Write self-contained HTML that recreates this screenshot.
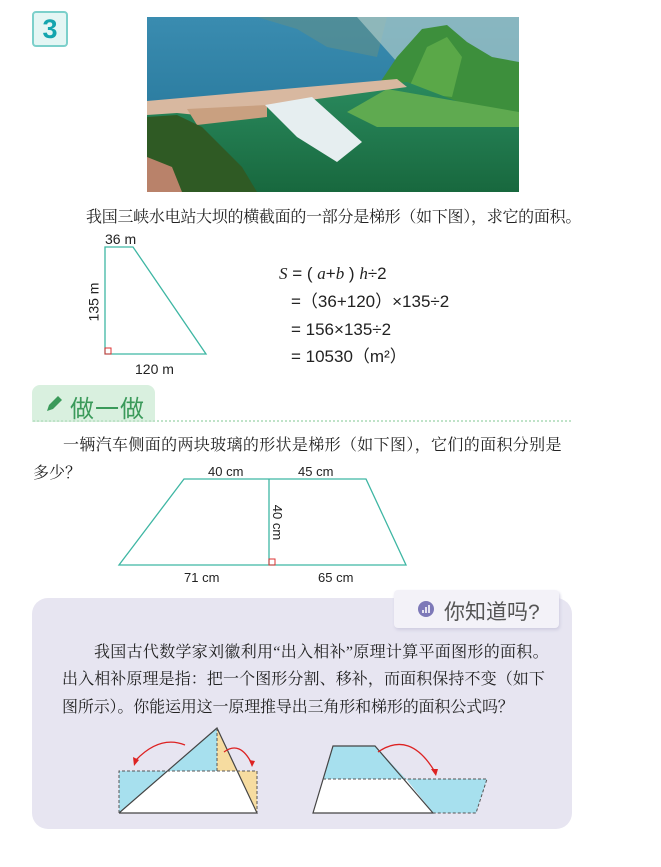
<!DOCTYPE html>
<html><head><meta charset="utf-8"><style>
*{margin:0;padding:0;box-sizing:border-box}
body{width:661px;height:867px;background:#fff;position:relative;overflow:hidden;font-family:"Liberation Serif","Noto Serif CJK SC",serif;color:#222}
.a{position:absolute;white-space:nowrap}
.s{font-family:"Liberation Sans","Noto Sans CJK SC",sans-serif}
.t{font-size:16px;line-height:17px}
.f{font-size:17px;line-height:20px;height:20px}
</style></head><body>
<div class="a s" style="left:32px;top:11px;width:36px;height:36px;border:2px solid #7cd0cb;border-radius:4px;background:#e4f6f4;color:#15a5ae;font-size:27px;font-weight:bold;text-align:center;line-height:32px">3</div>

<svg class="a" style="left:147px;top:17px" width="372" height="175" viewBox="0 0 372 175">
<defs><linearGradient id="lk" x1="0" y1="0" x2="0" y2="1"><stop offset="0" stop-color="#3a8cb0"/><stop offset="1" stop-color="#1f6f92"/></linearGradient>
<linearGradient id="wt" x1="0" y1="0" x2="0" y2="1"><stop offset="0" stop-color="#2a8a5e"/><stop offset="1" stop-color="#18683e"/></linearGradient></defs>
<rect width="372" height="175" fill="url(#lk)"/>
<path d="M110 0 L240 0 L230 40 L180 30 L150 12Z" fill="#5f8f8a" opacity=".6"/>
<path d="M210 0 L372 0 L372 60 L330 50 L300 45 L250 45Z" fill="#a9c9c8" opacity=".7"/>
<path d="M230 70 L250 40 L275 12 L300 8 L320 25 L345 40 L372 45 L372 105 L300 95 L250 80Z" fill="#3d8f3c"/>
<path d="M260 75 L280 30 L300 20 L315 40 L305 80Z" fill="#5aa848"/>
<path d="M0 85 L0 175 L372 175 L372 95 L330 92 L260 65 L0 90Z" fill="url(#wt)"/>
<path d="M240 72 L372 95 L372 110 L230 110 L200 95Z" fill="#5faa50"/>
<path d="M0 84 L250 62 L260 70 L50 98 L30 96 L0 98Z" fill="#d8b8a0"/>
<path d="M40 92 L120 88 L120 100 L50 108Z" fill="#c9a080"/>
<path d="M118 88 L165 80 L215 125 L190 145 L150 120Z" fill="#e6eef0"/>
<path d="M0 100 L30 98 L55 110 L75 130 L95 150 L110 175 L0 175Z" fill="#2f5a24"/>
<path d="M0 140 L25 150 L35 175 L0 175Z" fill="#b9826a"/>
</svg>

<div class="a t" style="left:86px;top:209px;letter-spacing:-0.28px">我国三峡水电站大坝的横截面的一部分是梯形（如下图），求它的面积。</div>

<svg class="a" style="left:80px;top:230px" width="150" height="150">
<polygon points="25,17 53,17 126,124 25,124" fill="none" stroke="#3eb6a3" stroke-width="1.3"/>
<rect x="25" y="118" width="6" height="6" fill="none" stroke="#d33" stroke-width="1"/>
</svg>
<div class="a s" style="left:105px;top:231px;font-size:14px">36 m</div>
<div class="a s" style="left:74px;top:294px;font-size:14px;transform:rotate(-90deg)">135 m</div>
<div class="a s" style="left:135px;top:361px;font-size:14px">120 m</div>

<div class="a s f" style="left:279px;top:264px"><i style="font-family:'Liberation Serif'">S</i> = ( <i style="font-family:'Liberation Serif'">a</i>+<i style="font-family:'Liberation Serif'">b</i> ) <i style="font-family:'Liberation Serif'">h</i>÷2</div>
<div class="a s f" style="left:291px;top:292px">=（36+120）×135÷2</div>
<div class="a s f" style="left:291px;top:320px">= 156×135÷2</div>
<div class="a s f" style="left:291px;top:347px">= 10530（m²）</div>

<div class="a" style="left:32px;top:385px;width:123px;height:37px;background:#d9f0df;border-radius:8px 8px 0 0"></div>
<svg class="a" style="left:44px;top:394px" width="20" height="20"><path d="M3 17 L5 11 L14 2 L18 6 L9 15Z" fill="#3a9a5a"/></svg>
<div class="a s" style="left:70px;top:389px;font-size:24px;color:#3a9a5a;letter-spacing:1px">做一做</div>
<div class="a" style="left:33px;top:420px;width:538px;border-top:2px dotted #bfe3c8"></div>

<div class="a t" style="left:63px;top:437px;letter-spacing:.35px">一辆汽车侧面的两块玻璃的形状是梯形（如下图），它们的面积分别是</div>
<div class="a t" style="left:33px;top:465px">多少？</div>

<svg class="a" style="left:100px;top:470px" width="320" height="110">
<polygon points="84,9 266,9 306,95 19,95" fill="none" stroke="#3eb6a3" stroke-width="1.3"/>
<line x1="169" y1="9" x2="169" y2="95" stroke="#3eb6a3" stroke-width="1.3"/>
<rect x="169" y="89" width="6" height="6" fill="none" stroke="#d33" stroke-width="1"/>
</svg>
<div class="a s" style="left:208px;top:464px;font-size:13px">40 cm</div>
<div class="a s" style="left:298px;top:464px;font-size:13px">45 cm</div>
<div class="a s" style="left:260px;top:515px;font-size:13px;transform:rotate(90deg)">40 cm</div>
<div class="a s" style="left:184px;top:570px;font-size:13px">71 cm</div>
<div class="a s" style="left:318px;top:570px;font-size:13px">65 cm</div>

<div class="a" style="left:32px;top:598px;width:540px;height:231px;background:#e7e5f1;border-radius:16px"></div>
<div class="a" style="left:394px;top:590px;width:165px;height:38px;background:#f3f2f8;border-radius:4px;box-shadow:1px 2px 3px #cfcde0"></div>
<div class="a" style="left:418px;top:601px;width:16px;height:16px;border-radius:50%;background:#7d79b8"></div>
<svg class="a" style="left:418px;top:601px" width="16" height="16"><path d="M5 12V9M8 12V6M11 12V4" stroke="#fff" stroke-width="1.6"/></svg>
<div class="a s" style="left:444px;top:596px;font-size:21px;color:#555">你知道吗?</div>

<div class="a t" style="left:94px;top:644px;letter-spacing:.3px">我国古代数学家刘徽利用“出入相补”原理计算平面图形的面积。</div>
<div class="a t" style="left:62px;top:671px;letter-spacing:.1px">出入相补原理是指：把一个图形分割、移补，而面积保持不变（如下</div>
<div class="a t" style="left:62px;top:699px;letter-spacing:-0.15px">图所示）。你能运用这一原理推导出三角形和梯形的面积公式吗？</div>

<svg class="a" style="left:0;top:720px" width="661" height="110" viewBox="0 720 661 110">
<polygon points="217,728 168,771 217,771" fill="#a7e0ee"/>
<polygon points="119,771 168,771 119,813" fill="#a7e0ee"/>
<polygon points="217,728 237,771 217,771" fill="#f6dca0"/>
<polygon points="237,771 257,771 257,813" fill="#f6dca0"/>
<polygon points="168,771 237,771 257,813 119,813" fill="#fff"/>
<polyline points="119,813 217,728 257,813 119,813" fill="none" stroke="#444" stroke-width="1.2"/>
<path d="M119 813 V771 H257 V813 M217 728 V771" fill="none" stroke="#555" stroke-width="1" stroke-dasharray="3,2"/>
<path d="M185 745 Q160 735 136 760" fill="none" stroke="#d22" stroke-width="1.3"/>
<path d="M224 752 Q240 740 252 764" fill="none" stroke="#d22" stroke-width="1.3"/>
<polygon points="133,757 139,760 134,766" fill="#d22"/>
<polygon points="249,760 255,761 252,767" fill="#d22"/>

<polygon points="333,746 375,746 406,779 323,779" fill="#a7e0ee"/>
<polygon points="406,779 487,779 476,813 433,813" fill="#a7e0ee"/>
<polygon points="323,779 406,779 433,813 313,813" fill="#fff"/>
<path d="M313 813 L333 746 H375 L433 813 Z" fill="none" stroke="#444" stroke-width="1.2"/>
<path d="M323 779 H487 L476 813 H433" fill="none" stroke="#555" stroke-width="1" stroke-dasharray="3,2"/>
<path d="M378 752 Q410 730 435 772" fill="none" stroke="#d22" stroke-width="1.3"/>
<polygon points="431,769 438,769 436,776" fill="#d22"/>
</svg>
</body></html>
